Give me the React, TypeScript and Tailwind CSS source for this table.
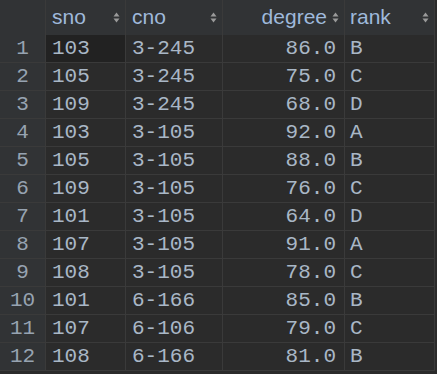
const rows: [string, string, string, string, string][] = [
  ['1', '103', '3-245', '86.0', 'B'],
  ['2', '105', '3-245', '75.0', 'C'],
  ['3', '109', '3-245', '68.0', 'D'],
  ['4', '103', '3-105', '92.0', 'A'],
  ['5', '105', '3-105', '88.0', 'B'],
  ['6', '109', '3-105', '76.0', 'C'],
  ['7', '101', '3-105', '64.0', 'D'],
  ['8', '107', '3-105', '91.0', 'A'],
  ['9', '108', '3-105', '78.0', 'C'],
  ['10', '101', '6-166', '85.0', 'B'],
  ['11', '107', '6-106', '79.0', 'C'],
  ['12', '108', '6-166', '81.0', 'B'],
];

function SortIcon() {
  return (
    <svg width="7" height="11" viewBox="0 0 7 11" className="shrink-0">
      <path d="M3.5 0.5L6.5 4.5H0.5Z" fill="#9a9a9a" />
      <path d="M3.5 10.5L6.5 6.5H0.5Z" fill="#9a9a9a" />
    </svg>
  );
}

const mono = { fontFamily: '"Liberation Mono", monospace' };
const sans = { fontFamily: '"Liberation Sans", Arial, sans-serif' };

export default function App() {
  return (
    <div className="w-[437px] h-[374px] bg-[#2b2b2b] overflow-hidden">
      <div className="grid w-[435px] grid-cols-[46px_80px_97px_122px_90px]">
        {/* header */}
        <div className="h-[35px] bg-[#313335] border-r border-[#3a3a3a]" />
        {['sno', 'cno'].map((h) => (
          <div
            key={h}
            className="h-[35px] bg-[#313335] border-r border-[#3a3a3a] flex items-center pl-[6px] pr-[5px] text-[21px] text-[#9fb9db]"
            style={sans}
          >
            <span className="flex-1 leading-none pb-[3px]">{h}</span>
            <SortIcon />
          </div>
        ))}
        <div
          className="h-[35px] bg-[#313335] border-r border-[#3a3a3a] flex items-center justify-end gap-[5px] pr-[5px] text-[21px] text-[#9fb9db]"
          style={sans}
        >
          <span className="leading-none pb-[3px]">degree</span>
          <SortIcon />
        </div>
        <div
          className="h-[35px] bg-[#313335] border-r border-[#3a3a3a] flex items-center pl-[5px] pr-[5px] text-[21px] text-[#9fb9db]"
          style={sans}
        >
          <span className="flex-1 leading-none pb-[3px]">rank</span>
          <SortIcon />
        </div>

        {/* body */}
        {rows.map((r, i) => (
          <div key={i} className="contents text-[21px] text-[#a9b7c6]" style={mono}>
            <div className="h-[28px] bg-[#313335] border-r border-b border-[#3a3a3a] flex items-center justify-center text-[#97a3b1]">
              {r[0]}
            </div>
            <div
              className={`h-[28px] border-r border-b border-[#3a3a3a] flex items-center pl-[6px] ${
                i === 0 ? 'bg-[#222222]' : ''
              }`}
            >
              {r[1]}
            </div>
            <div className="h-[28px] border-r border-b border-[#3a3a3a] flex items-center pl-[6px]">{r[2]}</div>
            <div className="h-[28px] border-r border-b border-[#3a3a3a] flex items-center justify-end pr-[8px]">
              {r[3]}
            </div>
            <div className="h-[28px] border-r border-b border-[#3a3a3a] flex items-center pl-[5px]">{r[4]}</div>
          </div>
        ))}
      </div>
    </div>
  );
}
